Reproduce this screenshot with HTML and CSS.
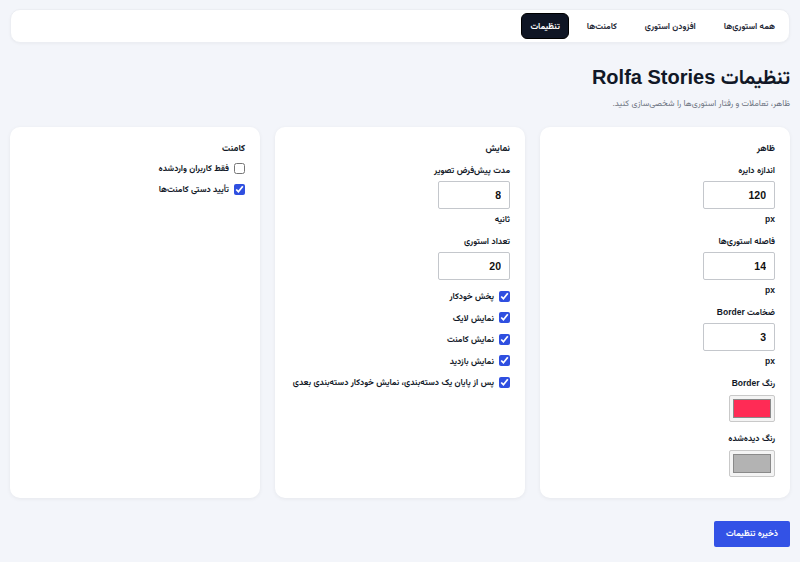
FILE: index.html
```html
<!DOCTYPE html>
<html lang="fa" dir="rtl">
<head>
    <meta charset="UTF-8">
    <title>تنظیمات Rolfa Stories</title>
    <link rel="stylesheet" href="styles.css">
</head>
<body>

    <nav class="tabs">
        <a href="#">همه استوری‌ها</a>
        <a href="#">افزودن استوری</a>
        <a href="#">کامنت‌ها</a>
        <a href="#" class="active">تنظیمات</a>
    </nav>

    <header class="page-head">
        <h1>تنظیمات Rolfa Stories</h1>
        <p>ظاهر، تعاملات و رفتار استوری‌ها را شخصی‌سازی کنید.</p>
    </header>

    <div class="cards">
        <section class="card">
            <h3>ظاهر</h3>
            <div class="field">
                <label>اندازه دایره</label>
                <input type="number" value="120">
                <span class="unit">px</span>
            </div>
            <div class="field">
                <label>فاصله استوری‌ها</label>
                <input type="number" value="14">
                <span class="unit">px</span>
            </div>
            <div class="field">
                <label>ضخامت Border</label>
                <input type="number" value="3">
                <span class="unit">px</span>
            </div>
            <div class="field">
                <label>رنگ Border</label>
                <input type="color" value="#ff2b55">
            </div>
            <div class="field">
                <label>رنگ دیده‌شده</label>
                <input type="color" value="#b3b3b3">
            </div>
        </section>

        <section class="card">
            <h3>نمایش</h3>
            <div class="field">
                <label>مدت پیش‌فرض تصویر</label>
                <input type="number" value="8">
                <span class="unit">ثانیه</span>
            </div>
            <div class="field">
                <label>تعداد استوری</label>
                <input type="number" value="20">
            </div>
            <div class="checks">
                <label class="check"><input type="checkbox" checked> پخش خودکار</label>
                <label class="check"><input type="checkbox" checked> نمایش لایک</label>
                <label class="check"><input type="checkbox" checked> نمایش کامنت</label>
                <label class="check"><input type="checkbox" checked> نمایش بازدید</label>
                <label class="check"><input type="checkbox" checked> پس از پایان یک دسته‌بندی، نمایش خودکار دسته‌بندی بعدی</label>
            </div>
        </section>

        <section class="card">
            <h3>کامنت</h3>
            <div class="checks tight">
                <label class="check"><input type="checkbox"> فقط کاربران واردشده</label>
                <label class="check"><input type="checkbox" checked> تأیید دستی کامنت‌ها</label>
            </div>
        </section>
    </div>

    <div class="actions">
        <button type="button">ذخیره تنظیمات</button>
    </div>

</body>
</html>
```

FILE: styles.css
```css
body {
    margin: 0;
    padding: 9px 10px 0;
    background: #f3f5fa;
    color: #111827;
    font-family: "Liberation Sans", "Vazirmatn", sans-serif;
    font-size: 8.5px;
}

/* top tab bar */
.tabs {
    display: flex;
    align-items: center;
    gap: 8px;
    height: 34px;
    padding: 0 4px;
    background: #fff;
    border: 1px solid #eceef3;
    border-radius: 10px;
    box-sizing: border-box;
    box-shadow: 0 1px 3px rgba(0, 0, 0, 0.04);
}
.tabs a {
    padding: 0 10px;
    line-height: 26px;
    border-radius: 6px;
    color: #1f2937;
    font-weight: bold;
    font-size: 8.5px;
    text-decoration: none;
}
.tabs a.active {
    background: #0f1524;
    color: #fff;
    line-height: 24px;
    padding: 0 8px;
    border: 1px solid #000;
}

.page-head {
    padding: 22px 0 0;
}
.page-head h1 {
    margin: 0;
    font-size: 20px;
    line-height: 24px;
}
.page-head p {
    margin: 8px 0 0;
    color: #6b7280;
    font-size: 8.5px;
    line-height: 12px;
}

/* settings cards */
.cards {
    display: grid;
    grid-template-columns: repeat(3, minmax(0, 1fr));
    gap: 15px;
    margin-top: 18px;
}
.card {
    background: #fff;
    border-radius: 10px;
    padding: 14px 15px 21px;
    box-shadow: 0 1px 4px rgba(0, 0, 0, 0.06);
}
.card h3 {
    margin: 0 0 9px;
    font-size: 9px;
    line-height: 14px;
}

.field {
    display: flex;
    flex-direction: column;
    align-items: flex-start;
    margin-bottom: 10px;
}
.field:last-child {
    margin-bottom: 0;
}
.field label,
.field .unit {
    font-weight: bold;
    line-height: 12px;
}
.field input[type="number"] {
    width: 72px;
    height: 28px;
    margin: 5px 0 0;
    padding: 0 8px;
    box-sizing: border-box;
    border: 1px solid #c4c7cc;
    border-radius: 2px;
    font: bold 10.5px "Liberation Sans", sans-serif;
    color: #111;
    text-align: right;
}
.field .unit {
    margin-top: 4px;
}

/* colour pickers: light frame around a bordered swatch */
.field input[type="color"] {
    width: 46px;
    height: 27px;
    margin: 6px 0 0;
    padding: 3px;
    box-sizing: border-box;
    border: 1px solid #c9c9c9;
    border-radius: 2px;
    background: #f4f4f4;
}
.field input[type="color"]::-webkit-color-swatch-wrapper {
    padding: 0;
}
.field input[type="color"]::-webkit-color-swatch {
    border: 1px solid #8a8a8a;
    border-radius: 0;
}

.checks {
    display: flex;
    flex-direction: column;
    gap: 9.5px;
}
.checks.tight {
    margin-top: -2px;
    gap: 9px;
}
.check {
    display: flex;
    align-items: center;
    gap: 5px;
    font-weight: bold;
    line-height: 12px;
    white-space: nowrap;
}
.check input {
    width: 11px;
    height: 11px;
    margin: 0;
    accent-color: #2f4fe0;
}

.actions {
    display: flex;
    padding: 23px 0 0;
}
.actions button {
    padding: 0 12px;
    height: 26px;
    border: 0;
    border-radius: 2px;
    background: #3352e6;
    color: #fff;
    font: bold 8.5px "Liberation Sans", "Vazirmatn", sans-serif;
}
```
